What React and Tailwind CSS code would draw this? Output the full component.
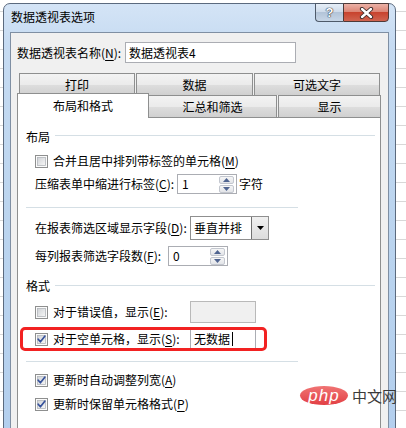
const U = ({ children }) => (
  <span className="underline underline-offset-[2px] decoration-[1px]">{children}</span>
);

function Checkbox({ checked }) {
  return (
    <svg width="13" height="13" viewBox="0 0 13 13" className="shrink-0">
      <defs>
        <linearGradient id="cbg" x1="0" y1="0" x2="1" y2="1">
          <stop offset="0" stopColor="#cfd2d6" />
          <stop offset="1" stopColor="#f7f7f7" />
        </linearGradient>
      </defs>
      <rect x="0.5" y="0.5" width="12" height="12" fill="#fbfbfb" stroke="#8e8f8f" />
      <rect x="2.5" y="2.5" width="8" height="8" fill="url(#cbg)" stroke="#b2b6bb" strokeWidth="0.8" />
      {checked && (
        <path d="M3.2 6.2 L5.4 8.8 L9.8 3.2" fill="none" stroke="#34509a" strokeWidth="1.7" strokeLinecap="round" strokeLinejoin="round" />
      )}
    </svg>
  );
}

function SpinArrow({ up }) {
  return (
    <div className="flex h-[8px] w-[15px] items-center justify-center rounded-[2px] border border-[#c3c7cf] bg-[image:linear-gradient(to_bottom,#f6f6f6,#e2e4e8)]">
      <svg width="7" height="4" viewBox="0 0 7 4">
        {up ? <path d="M0 4 L3.5 0 L7 4 Z" fill="#4f6490" /> : <path d="M0 0 L3.5 4 L7 0 Z" fill="#4f6490" />}
      </svg>
    </div>
  );
}

function Spin({ value, w }) {
  return (
    <div className={`flex h-[20px] items-center border border-[#abadb3] bg-white ${w}`}>
      <span className="flex-1 pl-[4px] leading-[16px]">{value}</span>
      <div className="mr-[2px] flex flex-col gap-[1px]">
        <SpinArrow up />
        <SpinArrow />
      </div>
    </div>
  );
}

function Tab({ w, children, extra }) {
  return (
    <div
      className={`flex h-full items-center justify-center border border-b-0 border-[#8e8f8f] bg-[image:linear-gradient(to_bottom,#f3f3f3,#ebebeb_50%,#dedede_50%,#d0d0d0)] ${w} ${extra || ""}`}
    >
      {children}
    </div>
  );
}

function Sep({ mt }) {
  return <div className={`ml-[8px] h-[1px] w-[272px] bg-[#d5dfe5] ${mt}`} />;
}

export default function App() {
  return (
    <div className="relative h-[428px] w-[406px] overflow-hidden bg-white bg-[image:repeating-linear-gradient(to_bottom,transparent_0px,transparent_11px,#d8d8d8_11px,#d8d8d8_12px,transparent_12px,transparent_19px)] font-['Noto_Sans_CJK_SC','Noto_Sans',sans-serif] text-[12px] leading-[16px] text-black">
      {/* window */}
      <div className="ml-[3px] mt-[3px] flex h-[440px] w-[393px] flex-col rounded-t-[7px] border border-[#5b6a7e] bg-[image:linear-gradient(to_bottom,#d4e4f6,#c6dbf2_40px,#bcd5ef_200px,#b3cfee)]">
        {/* title bar */}
        <div className="flex h-[28px] shrink-0">
          <span className="pl-[7px] pt-[5px] leading-[16px]">数据透视表选项</span>
          <div className="-mt-[1px] ml-auto mr-[6px] flex h-[19px]">
            <div className="flex w-[28px] items-center justify-center rounded-bl-[4px] border border-r-0 border-[#4e5a6a] bg-[image:linear-gradient(to_bottom,#e6eef7,#cfdceb_45%,#b3c4d8_50%,#c7d6e7)]">
              <span className="font-['Liberation_Sans',sans-serif] text-[13px] font-bold leading-none text-white [text-shadow:0_0_1px_#2c3440,0_0_1px_#2c3440,0_0_1px_#2c3440]">
                ?
              </span>
            </div>
            <div className="flex w-[46px] items-center justify-center rounded-br-[4px] border border-[#4e3a38] bg-[image:linear-gradient(to_bottom,#ebb1a6,#dc8676_45%,#c8432e_50%,#d06450)]">
              <svg width="15" height="12" viewBox="0 0 15 12">
                <path d="M3 2 L12 10 M12 2 L3 10" stroke="#3a2a28" strokeWidth="4.2" strokeLinecap="round" />
                <path d="M3 2 L12 10 M12 2 L3 10" stroke="#ffffff" strokeWidth="2.4" strokeLinecap="round" />
              </svg>
            </div>
          </div>
        </div>

        {/* client */}
        <div className="mx-[6px] flex-1 border border-[#7f8fa3] bg-[#f0f0f0] px-[6px]">
          <div className="mt-[9px] flex h-[21px] items-center">
            <span className="w-[108px] shrink-0">
              数据透视表名称(<U>N</U>):
            </span>
            <div className="flex h-[21px] w-[171px] items-center border border-[#abadb3] bg-white pl-[3px]">
              数据透视表4
            </div>
          </div>

          {/* tabs */}
          <div className="mt-[10px] w-[364px]">
            <div className="flex h-[22px] gap-[1px] pl-[2px]">
              <Tab w="w-[116px]">打印</Tab>
              <Tab w="w-[117px]">数据</Tab>
              <Tab w="w-[126px]">可选文字</Tab>
            </div>
            <div className="flex h-[22px] items-end">
              <div className="relative z-10 -mb-[1px] flex h-[25px] w-[132px] items-center justify-center border border-b-0 border-[#8e8f8f] bg-white">
                布局和格式
              </div>
              <Tab w="w-[128px]" extra="border-l-0">
                汇总和筛选
              </Tab>
              <div className="w-[1px]" />
              <Tab w="w-[103px]">显示</Tab>
            </div>

            {/* panel */}
            <div className="flex h-[320px] w-[364px] flex-col border border-[#8e8f8f] bg-white">
              {/* 布局 */}
              <div className="mt-[11px] flex h-[16px] pl-[8px] pr-[5px]">
                <span>布局</span>
                <div className="ml-[5px] mt-[6px] h-[1px] flex-1 bg-[#d5dfe5]" />
              </div>
              <div className="mt-[8px] flex h-[16px] items-center pl-[17px]">
                <Checkbox />
                <span className="ml-[5px]">
                  合并且居中排列带标签的单元格(<U>M</U>)
                </span>
              </div>
              <div className="mt-[5px] flex h-[20px] items-center pl-[17px]">
                <span className="w-[142px] shrink-0">
                  压缩表单中缩进行标签(<U>C</U>):
                </span>
                <Spin w="w-[60px]" value="1" />
                <span className="ml-[2px]">字符</span>
              </div>

              <Sep mt="mt-[13px]" />

              <div className="mt-[8px] flex h-[24px] items-center pl-[17px]">
                <span className="w-[155px] shrink-0">
                  在报表筛选区域显示字段(<U>D</U>):
                </span>
                <div className="flex h-[24px] w-[79px] border border-[#8f8f8f] bg-white">
                  <span className="flex-1 pl-[3px] leading-[22px]">垂直并排</span>
                  <div className="flex w-[17px] items-center justify-center border-l border-[#707070] bg-[image:linear-gradient(to_bottom,#f0f0f0,#dcdcdc)]">
                    <svg width="7" height="4" viewBox="0 0 7 4">
                      <path d="M0 0 L3.5 4 L7 0 Z" fill="#000" />
                    </svg>
                  </div>
                </div>
              </div>
              <div className="mt-[6px] flex h-[20px] items-center pl-[17px]">
                <span className="w-[133px] shrink-0">
                  每列报表筛选字段数(<U>F</U>):
                </span>
                <Spin w="w-[60px]" value="0" />
              </div>

              {/* 格式 */}
              <div className="mt-[12px] flex h-[16px] pl-[8px] pr-[5px]">
                <span>格式</span>
                <div className="ml-[5px] mt-[7px] h-[1px] flex-1 bg-[#d5dfe5]" />
              </div>
              <div className="mt-[7px] flex h-[22px] items-center pl-[17px]">
                <div className="flex w-[155px] shrink-0 items-center">
                  <Checkbox />
                  <span className="ml-[5px]">
                    对于错误值，显示(<U>E</U>):
                  </span>
                </div>
                <div className="h-[22px] w-[66px] border border-[#b9b9b9] bg-[#f0f0f0]" />
              </div>
              <div className="relative mt-[5px] flex h-[22px] items-center pl-[17px]">
                <div className="flex w-[155px] shrink-0 items-center">
                  <Checkbox checked />
                  <span className="ml-[5px]">
                    对于空单元格，显示(<U>S</U>):
                  </span>
                </div>
                <div className="flex h-[22px] w-[66px] items-center border border-[#abadb3] bg-white pl-[3px]">
                  <span>无数据</span>
                  <span className="ml-[2px] h-[14px] w-[1px] bg-black" />
                </div>
                <div className="absolute left-[2px] top-[-1px] h-[24px] w-[247px] rounded-[5px] border-[3px] border-[#f22222]" />
              </div>

              <Sep mt="mt-[11px]" />

              <div className="mt-[10px] flex h-[16px] items-center pl-[17px]">
                <Checkbox checked />
                <span className="ml-[5px]">
                  更新时自动调整列宽(<U>A</U>)
                </span>
              </div>
              <div className="mt-[8px] flex h-[16px] items-center pl-[17px]">
                <Checkbox checked />
                <span className="ml-[5px]">
                  更新时保留单元格格式(<U>P</U>)
                </span>
              </div>
            </div>
          </div>
        </div>
      </div>

      {/* watermark */}
      <div className="absolute left-[300px] top-[386px] flex items-center">
        <div className="flex h-[19px] w-[48px] items-center justify-center rounded-[50%] bg-[image:linear-gradient(to_bottom,#f07474,#e23f44)]">
          <span className="font-['Liberation_Sans',sans-serif] text-[17px] italic leading-none tracking-[1px] text-white">
            php
          </span>
        </div>
        <span className="ml-[4px] text-[15px] leading-none text-[#3a3a3a]">中文网</span>
      </div>
    </div>
  );
}
